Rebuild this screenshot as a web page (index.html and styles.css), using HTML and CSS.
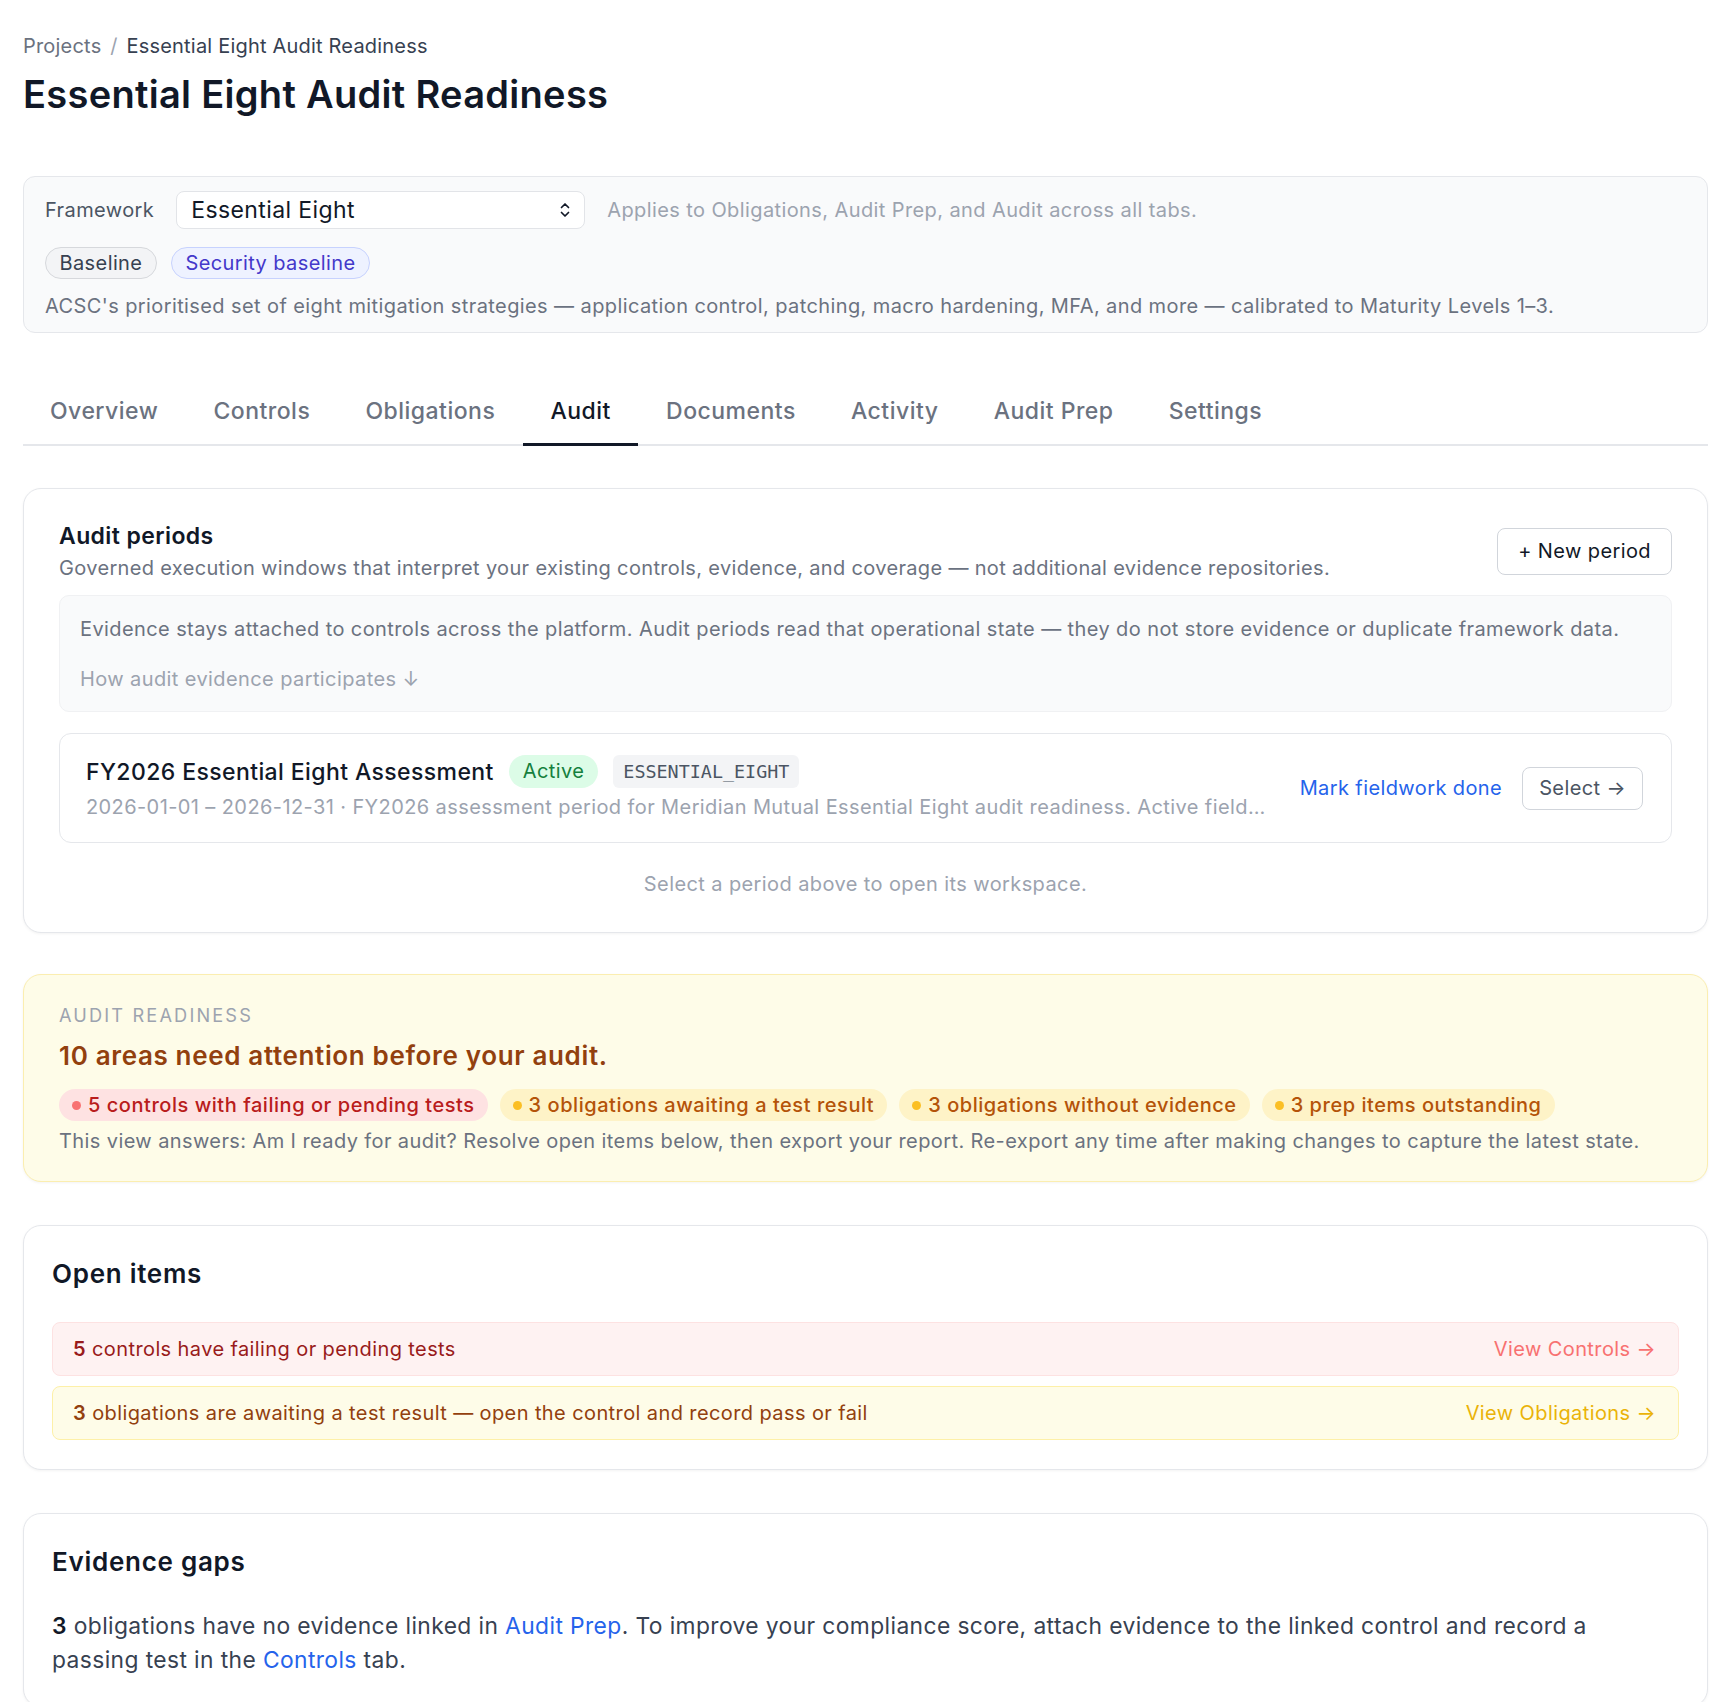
FILE: index.html
```html
<!DOCTYPE html>
<html lang="en">
<head>
  <meta charset="UTF-8">
  <title>Essential Eight Audit Readiness</title>
  <meta name="viewport" content="width=device-width, initial-scale=1.0">
  <link rel="stylesheet" href="styles.css">
</head>
<body>
  <div class="page">
    <nav class="crumbs">
      <a href="#">Projects</a>
      <span class="sep">/</span>
      <span class="current">Essential Eight Audit Readiness</span>
    </nav>
    <h1 class="page-title">Essential Eight Audit Readiness</h1>

    <!-- framework picker -->
    <section class="framework">
      <div class="framework-row">
        <span class="framework-label">Framework</span>
        <div class="select">
          <span>Essential Eight</span>
          <svg class="select-icon" width="12" height="18" viewBox="0 0 12 18" fill="none" stroke="#111827" stroke-width="1.7" stroke-linecap="round" stroke-linejoin="round">
            <path d="M2.5 6.5 6 3 9.5 6.5"/>
            <path d="M2.5 11.5 6 15 9.5 11.5"/>
          </svg>
        </div>
        <span class="hint">Applies to Obligations, Audit Prep, and Audit across all tabs.</span>
      </div>
      <div class="tags">
        <span class="tag">Baseline</span>
        <span class="tag tag-indigo">Security baseline</span>
      </div>
      <p class="framework-desc">ACSC's prioritised set of eight mitigation strategies — application control, patching, macro hardening, MFA, and more — calibrated to Maturity Levels 1–3.</p>
    </section>

    <nav class="tabs">
      <a class="tab" href="#">Overview</a>
      <a class="tab" href="#">Controls</a>
      <a class="tab" href="#">Obligations</a>
      <a class="tab active" href="#">Audit</a>
      <a class="tab" href="#">Documents</a>
      <a class="tab" href="#">Activity</a>
      <a class="tab" href="#">Audit Prep</a>
      <a class="tab" href="#">Settings</a>
    </nav>

    <!-- audit periods -->
    <section class="card periods">
      <div class="periods-head">
        <div>
          <h2 class="card-title">Audit periods</h2>
          <p class="muted">Governed execution windows that interpret your existing controls, evidence, and coverage — not additional evidence repositories.</p>
        </div>
        <button class="btn btn-new" type="button">+ New period</button>
      </div>

      <div class="info-box">
        <p>Evidence stays attached to controls across the platform. Audit periods read that operational state — they do not store evidence or duplicate framework data.</p>
        <a class="info-toggle" href="#">How audit evidence participates ↓</a>
      </div>

      <div class="period">
        <div class="period-main">
          <div class="period-title">
            <span class="period-name">FY2026 Essential Eight Assessment</span>
            <span class="badge badge-green">Active</span>
            <span class="badge badge-code">ESSENTIAL_EIGHT</span>
          </div>
          <p class="period-meta">2026-01-01 – 2026-12-31 · FY2026 assessment period for Meridian Mutual Essential Eight audit readiness. Active fieldwork is under way across all eight strategies.</p>
        </div>
        <a class="link" href="#">Mark fieldwork done</a>
        <button class="btn btn-select" type="button">Select →</button>
      </div>

      <p class="empty">Select a period above to open its workspace.</p>
    </section>

    <!-- readiness summary -->
    <section class="card readiness">
      <div class="eyebrow">Audit readiness</div>
      <h2 class="readiness-title">10 areas need attention before your audit.</h2>
      <div class="chips">
        <span class="chip chip-red"><i class="dot"></i>5 controls with failing or pending tests</span>
        <span class="chip chip-amber"><i class="dot"></i>3 obligations awaiting a test result</span>
        <span class="chip chip-amber"><i class="dot"></i>3 obligations without evidence</span>
        <span class="chip chip-amber"><i class="dot"></i>3 prep items outstanding</span>
      </div>
      <p class="muted">This view answers: Am I ready for audit? Resolve open items below, then export your report. Re-export any time after making changes to capture the latest state.</p>
    </section>

    <section class="card open-items">
      <h2 class="section-title">Open items</h2>
      <div class="item item-red">
        <span><b>5</b> controls have failing or pending tests</span>
        <a href="#">View Controls →</a>
      </div>
      <div class="item item-amber">
        <span><b>3</b> obligations are awaiting a test result — open the control and record pass or fail</span>
        <a href="#">View Obligations →</a>
      </div>
    </section>

    <section class="card gaps">
      <h2 class="section-title">Evidence gaps</h2>
      <p class="gaps-text"><b>3</b> obligations have no evidence linked in <a class="link" href="#">Audit Prep</a>. To improve your compliance score, attach evidence to the linked control and record a passing test in the <a class="link" href="#">Controls</a> tab.</p>
    </section>
  </div>
</body>
</html>
```

FILE: styles.css
```css
/* Reset */
* {
  margin: 0;
  padding: 0;
  box-sizing: border-box;
}

body {
  font-family: 'Inter', 'Noto Sans', sans-serif;
  font-size: 20px;
  line-height: 28px;
  letter-spacing: 0.02em;
  color: #111827;
  background: #fff;
}

a {
  text-decoration: none;
  color: inherit;
}

button {
  font: inherit;
  letter-spacing: inherit;
  cursor: pointer;
}

.page {
  padding: 32px 28px 60px 23px;
}

/* Header */
.crumbs {
  color: #6b7280;
  letter-spacing: 0.01em;
}

.crumbs .sep {
  color: #9ca3af;
  margin: 0 3px;
}

.crumbs .current {
  color: #374151;
}

.page-title {
  margin-top: 12px;
  font-size: 38px;
  line-height: 44px;
  font-weight: 600;
  letter-spacing: 0.008em;
}

/* Framework picker */
.framework {
  margin-top: 60px;
  padding: 14px 21px 12px;
  background: #f9fafb;
  border: 1px solid #e5e7eb;
  border-radius: 12px;
}

.framework-row {
  display: flex;
  align-items: center;
  gap: 22px;
}

.framework-label {
  color: #4b5563;
}

.select {
  width: 409px;
  height: 38px;
  display: flex;
  align-items: center;
  justify-content: space-between;
  padding: 0 13px 0 14px;
  background: #fff;
  border: 1px solid #e2e4e8;
  border-radius: 8px;
  font-size: 23px;
}

.hint {
  color: #9ca3af;
}

.tags {
  display: flex;
  gap: 14px;
  margin-top: 18px;
}

.tag {
  height: 32px;
  line-height: 30px;
  padding: 0 13.5px;
  border: 1px solid #d6d8dc;
  border-radius: 999px;
  background: #f3f4f6;
  color: #374151;
}

.tag-indigo {
  background: #eef2ff;
  border-color: #c7d2fe;
  color: #4338ca;
}

.framework-desc {
  margin-top: 13px;
  color: #6b7280;
}

/* Tabs */
.tabs {
  display: flex;
  margin-top: 49px;
  border-bottom: 2px solid #e5e7eb;
}

.tab {
  padding: 15px 27.6px 18px;
  margin-bottom: -2px;
  border-bottom: 3px solid transparent;
  font-size: 23px;
  font-weight: 500;
  letter-spacing: 0.021em;
  color: #6b7280;
}

.tab:first-child {
  padding-left: 27px;
}

.tab.active {
  color: #111827;
  border-bottom-color: #111827;
}

/* Cards */
.card {
  border: 1px solid #e5e7eb;
  border-radius: 18px;
  background: #fff;
  box-shadow: 0 1px 3px rgba(0, 0, 0, 0.05);
}

.muted {
  color: #6b7280;
}

.link {
  color: #2563eb;
}

.btn {
  background: #fff;
  border: 1px solid #d1d5db;
  border-radius: 8px;
  color: #111827;
}

/* Audit periods */
.periods {
  margin-top: 42px;
  padding: 31px 35px 34px;
}

.periods-head {
  display: flex;
  align-items: center;
  justify-content: space-between;
}

.card-title {
  font-size: 23px;
  line-height: 32px;
  font-weight: 600;
}

.periods-head .muted {
  margin-top: 2px;
  letter-spacing: 0.017em;
}

.btn-new {
  height: 47px;
  padding: 0 20px;
}

.info-box {
  margin-top: 13px;
  padding: 19px 20px 18px;
  background: #f9fafb;
  border: 1px solid #f0f1f3;
  border-radius: 10px;
  color: #6b7280;
}

.info-toggle {
  display: block;
  margin-top: 22px;
  color: #9ca3af;
}

.period {
  display: flex;
  align-items: center;
  gap: 20px;
  margin-top: 21px;
  padding: 21px 28px 21px 26px;
  border: 1px solid #e5e7eb;
  border-radius: 12px;
}

.period-main {
  flex: 1;
  min-width: 0;
  margin-right: 8px;
}

.period-title {
  display: flex;
  align-items: center;
  gap: 15px;
}

.period-name {
  font-size: 23px;
  font-weight: 500;
}

.badge {
  height: 33px;
  line-height: 33px;
  padding: 0 14px;
  border-radius: 999px;
}

.badge-green {
  background: #dcfce7;
  color: #15803d;
}

.badge-code {
  border-radius: 6px;
  padding: 0 10px;
  background: #f3f4f6;
  color: #4b5563;
  font-family: 'DejaVu Sans Mono', 'Liberation Mono', monospace;
  font-size: 18.4px;
  letter-spacing: 0;
}

.period-meta {
  margin-top: 5px;
  color: #9ca3af;
  white-space: nowrap;
  overflow: hidden;
  text-overflow: ellipsis;
}

.btn-select {
  height: 43px;
  padding: 0 16px;
  color: #4b5563;
}

.empty {
  margin-top: 27px;
  text-align: center;
  color: #9ca3af;
}

/* Readiness summary */
.readiness {
  margin-top: 41px;
  padding: 28px 35px 26px;
  background: #fefce8;
  border-color: #fbeeb0;
}

.eyebrow {
  font-size: 18.2px;
  line-height: 24px;
  text-transform: uppercase;
  letter-spacing: 0.118em;
  color: #9ca3af;
}

.readiness-title {
  margin-top: 11px;
  font-size: 26px;
  line-height: 36px;
  font-weight: 600;
  letter-spacing: 0.025em;
  color: #92400e;
}

.chips {
  display: flex;
  gap: 12px;
  margin-top: 15px;
}

.chip {
  display: flex;
  align-items: center;
  gap: 7px;
  height: 32px;
  padding: 0 13px;
  border-radius: 999px;
  font-weight: 500;
  letter-spacing: 0.027em;
}

.chip .dot {
  width: 9px;
  height: 9px;
  border-radius: 50%;
}

.chip-red {
  background: #fee2e2;
  color: #b91c1c;
}

.chip-red .dot {
  background: #f87171;
}

.chip-amber {
  background: #fef3c7;
  color: #b45309;
}

.chip-amber .dot {
  background: #fbbf24;
}

.readiness .muted {
  margin-top: 6px;
}

/* Open items + gaps */
.open-items,
.gaps {
  margin-top: 43px;
  padding: 31px 28px 29px;
}

.section-title {
  font-size: 26px;
  line-height: 34px;
  font-weight: 600;
  letter-spacing: 0.028em;
}

.item {
  display: flex;
  justify-content: space-between;
  padding: 12px 22px 12px 20px;
  border: 1px solid;
  border-radius: 8px;
}

.item + .item {
  margin-top: 10px;
}

.open-items .item:first-of-type {
  margin-top: 31px;
}

.item b {
  font-weight: 600;
}

.item-red {
  background: #fef2f2;
  border-color: #fde2e2;
  color: #991b1b;
}

.item-red a {
  color: #f87171;
}

.item-amber {
  background: #fefce8;
  border-color: #fdf0a8;
  color: #92400e;
}

.item-amber a {
  color: #eab308;
}

.gaps-text {
  margin-top: 30px;
  font-size: 22.8px;
  line-height: 34px;
  color: #374151;
}

.gaps-text b {
  font-weight: 600;
  color: #111827;
}
```
